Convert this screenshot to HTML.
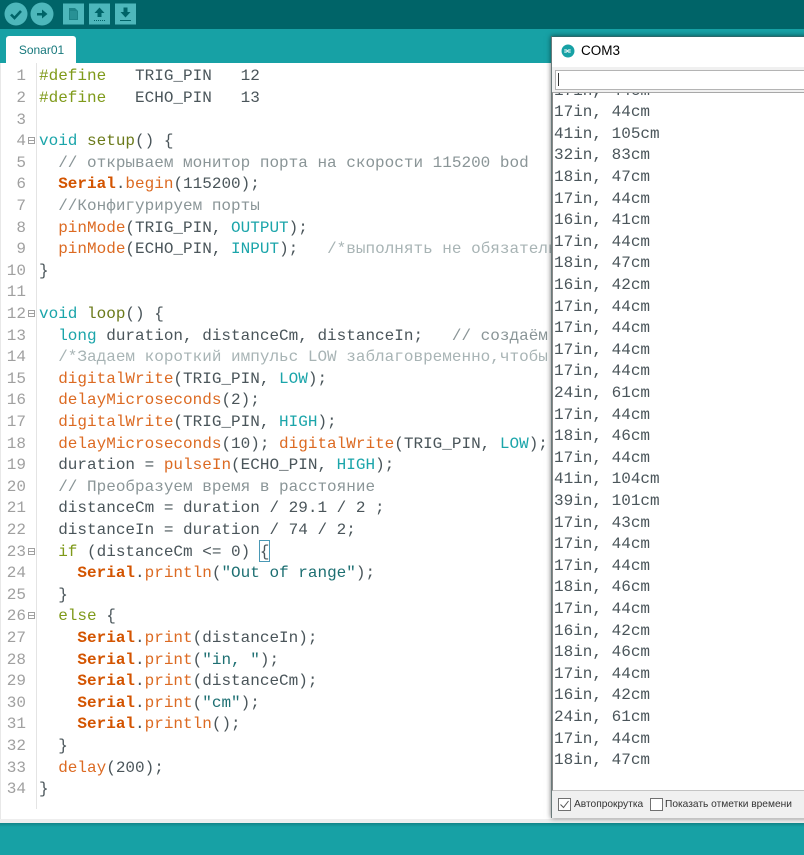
<!DOCTYPE html>
<html><head><meta charset="utf-8">
<style>
html,body{margin:0;padding:0;background:#17a1a5;}
#r{position:relative;width:804px;height:855px;overflow:hidden;background:#17a1a5;font-family:"Liberation Mono",monospace;filter:blur(.3px);}
.a{position:absolute;}
#tb{left:0;top:0;width:804px;height:29px;background:#006468;}
#tab{left:6px;top:36px;width:70px;height:27px;background:#fff;border-radius:3px 3px 0 0;font:12px/29px "Liberation Sans",sans-serif;color:#17787c;text-align:center;text-indent:1px;}
#ed{left:1px;top:63px;width:803px;height:756px;background:#fff;}
#gut{left:36px;top:63px;width:1px;height:746px;background:#e4e4e4;}
.l{position:absolute;left:39px;font-size:16px;line-height:21.6px;white-space:pre;color:#4a555a;height:21.6px;}
.n{position:absolute;left:0;width:26px;text-align:right;font-size:16px;line-height:21.6px;color:#a0a0a0;}
.f{position:absolute;left:28px;width:7px;height:7px;box-sizing:border-box;border:1px solid #a0a0a0;background:linear-gradient(#a0a0a0,#a0a0a0) center/5px 1px no-repeat;}
.o{color:#dc6a22}.ob{color:#d35400;font-weight:bold}.t{color:#1ba5aa}.g{color:#7f9a1a}.c{color:#a8b4b5}.c2{color:#8a9597}.d{color:#6b7a1a}.s{color:#1d6f72}
#win{left:551px;top:36px;width:260px;height:782px;background:#f0f0f0;box-shadow:0 0 5px rgba(0,0,0,.55);border-top:1px solid #2a6a6c;border-left:1px solid #6a7a7a;box-sizing:border-box;}
#tit{left:0;top:0;width:260px;height:30px;background:#fff;font:13.5px/28px "Liberation Sans",sans-serif;color:#000;}
#inp{left:3px;top:33px;width:260px;height:18px;background:#fff;border:1px solid #b4b4b4;}
#mon{left:0;top:55px;width:260px;height:699px;background:#fff;overflow:hidden;border-left:1px solid #8a8a8a;border-top:1px solid #a8a8a8;border-bottom:1px solid #c4c4c4;box-sizing:border-box;}
.m{position:absolute;left:1px;font-size:16px;line-height:21.6px;white-space:pre;color:#4a555a;}
.cb{position:absolute;top:798px;width:11px;height:11px;border:1px solid #707070;background:#fff;}
.lb{position:absolute;font:10.2px/14px "Liberation Sans",sans-serif;color:#333;white-space:nowrap;}
</style></head><body><div id="r">
<div id="tb" class="a"></div>
<svg class="a" style="left:0;top:0" width="140" height="29" viewBox="0 0 140 29">
<circle cx="16" cy="14" r="11.500" fill="#4db7bb"/><path d="M11 14.500l3.500 3.500 6.500-7" fill="none" stroke="#006468" stroke-width="2.600"/>
<circle cx="42" cy="14" r="11.500" fill="#4db7bb"/><path d="M37 13h5V9.500l5.500 4.500-5.500 4.500V15.500h-5z" fill="#006468"/>
<rect x="63" y="3.500" width="21" height="21" fill="#4db7bb"/><path d="M69 8h6l3 3v9h-9z" fill="#1d8488"/><path d="M70 12h7M70 14h7M70 16h7M70 18h7" stroke="#4db7bb" stroke-width=".6"/>
<rect x="89" y="3.500" width="21" height="21" fill="#4db7bb"/><path d="M99.500 7.500l5 5.500h-3v4h-4v-4h-3z" fill="#006468"/><path d="M94 20.500h11" stroke="#006468" stroke-width="1" stroke-dasharray="1 1"/>
<rect x="115" y="3.500" width="21" height="21" fill="#4db7bb"/><path d="M123.500 7.500h4v4.500h3l-5 5.500-5-5.500h3z" fill="#006468"/><path d="M120 20.500h11" stroke="#006468" stroke-width="1"/>
</svg>
<div id="tab" class="a">Sonar01</div>
<div id="ed" class="a"></div>
<div class="a" style="left:0;top:63px;width:1px;height:756px;background:#e8e8e8"></div>
<div id="gut" class="a"></div>
<div class="a" style="left:0;top:819px;width:804px;height:4px;background:#eeeeee"></div>
<div class="a" style="left:0;top:823px;width:804px;height:4px;background:linear-gradient(#128488,#17a1a5)"></div>

<div class="a" style="left:0;top:1.400px;width:551px;height:820px">
<div class="n" style="top:65px">1</div><div class="n" style="top:86.600px">2</div><div class="n" style="top:108.200px">3</div><div class="n" style="top:129.800px">4</div><div class="n" style="top:151.400px">5</div><div class="n" style="top:173px">6</div><div class="n" style="top:194.600px">7</div><div class="n" style="top:216.200px">8</div><div class="n" style="top:237.800px">9</div><div class="n" style="top:259.400px">10</div><div class="n" style="top:281px">11</div><div class="n" style="top:302.600px">12</div><div class="n" style="top:324.200px">13</div><div class="n" style="top:345.800px">14</div><div class="n" style="top:367.400px">15</div><div class="n" style="top:389px">16</div><div class="n" style="top:410.600px">17</div><div class="n" style="top:432.200px">18</div><div class="n" style="top:453.800px">19</div><div class="n" style="top:475.400px">20</div><div class="n" style="top:497px">21</div><div class="n" style="top:518.600px">22</div><div class="n" style="top:540.200px">23</div><div class="n" style="top:561.800px">24</div><div class="n" style="top:583.400px">25</div><div class="n" style="top:605px">26</div><div class="n" style="top:626.600px">27</div><div class="n" style="top:648.200px">28</div><div class="n" style="top:669.800px">29</div><div class="n" style="top:691.400px">30</div><div class="n" style="top:713px">31</div><div class="n" style="top:734.600px">32</div><div class="n" style="top:756.200px">33</div><div class="n" style="top:777.800px">34</div>

<div class="l" style="top:65px"><span class="g">#define</span>   TRIG_PIN   12</div>
<div class="l" style="top:86.600px"><span class="g">#define</span>   ECHO_PIN   13</div>
<div class="l" style="top:129.800px"><span class="t">void</span> <span class="d">setup</span>() {</div>
<div class="l" style="top:151.400px">  <span class="c2">// открываем монитор порта на скорости 115200 bod</span></div>
<div class="l" style="top:173px">  <span class="ob">Serial</span>.<span class="o">begin</span>(115200);</div>
<div class="l" style="top:194.600px">  <span class="c2">//Конфигурируем порты</span></div>
<div class="l" style="top:216.200px">  <span class="o">pinMode</span>(TRIG_PIN, <span class="t">OUTPUT</span>);</div>
<div class="l" style="top:237.800px">  <span class="o">pinMode</span>(ECHO_PIN, <span class="t">INPUT</span>);   <span class="c">/*выполнять не обязательно</span></div>
<div class="l" style="top:259.400px">}</div>
<div class="l" style="top:302.600px"><span class="t">void</span> <span class="d">loop</span>() {</div>
<div class="l" style="top:324.200px">  <span class="t">long</span> duration, distanceCm, distanceIn;   <span class="c2">// создаём</span></div>
<div class="l" style="top:345.800px">  <span class="c">/*Задаем короткий импульс LOW заблаговременно,чтобы</span></div>
<div class="l" style="top:367.400px">  <span class="o">digitalWrite</span>(TRIG_PIN, <span class="t">LOW</span>);</div>
<div class="l" style="top:389px">  <span class="o">delayMicroseconds</span>(2);</div>
<div class="l" style="top:410.600px">  <span class="o">digitalWrite</span>(TRIG_PIN, <span class="t">HIGH</span>);</div>
<div class="l" style="top:432.200px">  <span class="o">delayMicroseconds</span>(10); <span class="o">digitalWrite</span>(TRIG_PIN, <span class="t">LOW</span>);</div>
<div class="l" style="top:453.800px">  duration = <span class="o">pulseIn</span>(ECHO_PIN, <span class="t">HIGH</span>);</div>
<div class="l" style="top:475.400px">  <span class="c2">// Преобразуем время в расстояние</span></div>
<div class="l" style="top:497px">  distanceCm = duration / 29.1 / 2 ;</div>
<div class="l" style="top:518.600px">  distanceIn = duration / 74 / 2;</div>
<div class="l" style="top:540.200px">  <span class="g">if</span> (distanceCm &lt;= 0) {</div>
<div class="l" style="top:561.800px">    <span class="ob">Serial</span>.<span class="o">println</span>(<span class="s">"Out of range"</span>);</div>
<div class="l" style="top:583.400px">  }</div>
<div class="l" style="top:605px">  <span class="g">else</span> {</div>
<div class="l" style="top:626.600px">    <span class="ob">Serial</span>.<span class="o">print</span>(distanceIn);</div>
<div class="l" style="top:648.200px">    <span class="ob">Serial</span>.<span class="o">print</span>(<span class="s">"in, "</span>);</div>
<div class="l" style="top:669.800px">    <span class="ob">Serial</span>.<span class="o">print</span>(distanceCm);</div>
<div class="l" style="top:691.400px">    <span class="ob">Serial</span>.<span class="o">print</span>(<span class="s">"cm"</span>);</div>
<div class="l" style="top:713px">    <span class="ob">Serial</span>.<span class="o">println</span>();</div>
<div class="l" style="top:734.600px">  }</div>
<div class="l" style="top:756.200px">  <span class="o">delay</span>(200);</div>
<div class="l" style="top:777.800px">}</div>
</div>
<div class="f" style="top:137px"></div><div class="f" style="top:310px"></div><div class="f" style="top:548px"></div><div class="f" style="top:612px"></div>
<div class="a" style="left:259px;top:540px;width:9px;height:20px;border:1px solid #4a98b5"></div>

<div id="win" class="a">
<div id="tit" class="a"><span class="a" style="left:29px;top:0">COM3</span>
<svg class="a" style="left:9px;top:7px" width="14" height="14" viewBox="0 0 13 13"><circle cx="6.500" cy="6.500" r="6" fill="#17a1a5"/><path d="M3 5.500h2l2 2h2" fill="none" stroke="#e8f6f6" stroke-width="1"/><path d="M3 7.500h2l2-2h2" fill="none" stroke="#e8f6f6" stroke-width="1"/></svg></div>
<div id="inp" class="a"><div class="a" style="left:2px;top:2px;width:1px;height:13px;background:#333"></div></div>
<div id="mon" class="a">
<div class="m" style="top:-12.500px">17in, 44cm</div>
<div class="m" style="top:9.100px">17in, 44cm</div>
<div class="m" style="top:30.700px">41in, 105cm</div>
<div class="m" style="top:52.300px">32in, 83cm</div>
<div class="m" style="top:73.900px">18in, 47cm</div>
<div class="m" style="top:95.500px">17in, 44cm</div>
<div class="m" style="top:117.100px">16in, 41cm</div>
<div class="m" style="top:138.700px">17in, 44cm</div>
<div class="m" style="top:160.300px">18in, 47cm</div>
<div class="m" style="top:181.900px">16in, 42cm</div>
<div class="m" style="top:203.500px">17in, 44cm</div>
<div class="m" style="top:225.100px">17in, 44cm</div>
<div class="m" style="top:246.700px">17in, 44cm</div>
<div class="m" style="top:268.300px">17in, 44cm</div>
<div class="m" style="top:289.900px">24in, 61cm</div>
<div class="m" style="top:311.500px">17in, 44cm</div>
<div class="m" style="top:333.100px">18in, 46cm</div>
<div class="m" style="top:354.700px">17in, 44cm</div>
<div class="m" style="top:376.300px">41in, 104cm</div>
<div class="m" style="top:397.900px">39in, 101cm</div>
<div class="m" style="top:419.500px">17in, 43cm</div>
<div class="m" style="top:441.100px">17in, 44cm</div>
<div class="m" style="top:462.700px">17in, 44cm</div>
<div class="m" style="top:484.300px">18in, 46cm</div>
<div class="m" style="top:505.900px">17in, 44cm</div>
<div class="m" style="top:527.500px">16in, 42cm</div>
<div class="m" style="top:549.100px">18in, 46cm</div>
<div class="m" style="top:570.700px">17in, 44cm</div>
<div class="m" style="top:592.300px">16in, 42cm</div>
<div class="m" style="top:613.900px">24in, 61cm</div>
<div class="m" style="top:635.500px">17in, 44cm</div>
<div class="m" style="top:657.100px">18in, 47cm</div>
</div>
</div>
<div class="cb" style="left:558px"></div>
<svg class="a" style="left:558px;top:798px" width="13" height="13" viewBox="0 0 13 13"><path d="M2.500 6.500l3 3 5-6.500" fill="none" stroke="#555" stroke-width="1"/></svg>
<div class="lb" style="left:574px;top:798px">Автопрокрутка</div>
<div class="cb" style="left:650px"></div>
<div class="lb" style="left:665px;top:798px">Показать отметки времени</div>
</div></body></html>
